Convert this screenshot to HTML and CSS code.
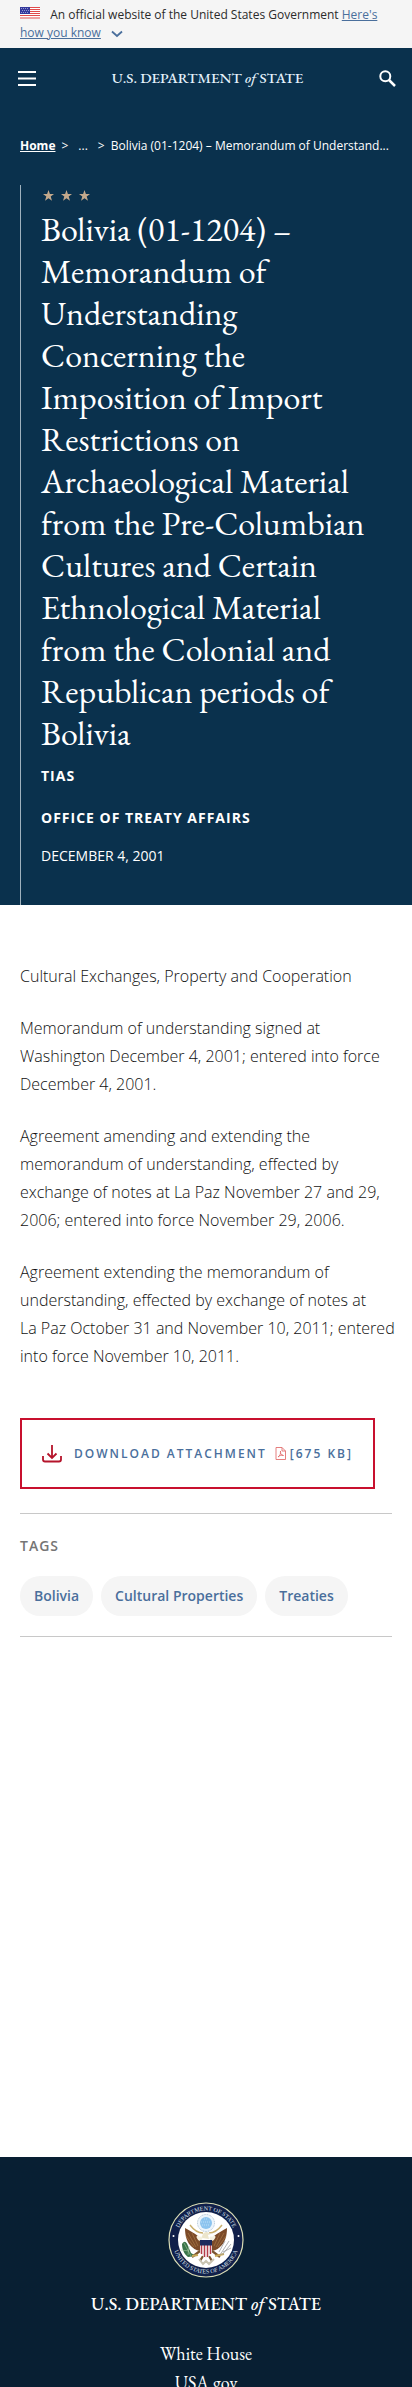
FILE: index.html
```html
<!DOCTYPE html>
<html lang="en">
<head>
<meta charset="utf-8">
<meta name="viewport" content="width=device-width, initial-scale=1">
<title>Bolivia (01-1204) - United States Department of State</title>
<link rel="stylesheet" href="styles.css">
</head>
<body>
<div class="page">
  <div class="banner">
    <svg class="banner-flag" viewBox="0 0 20 12" aria-hidden="true">
      <rect width="20" height="12" fill="#fff"/>
      <path d="M0 .5h20M0 2.5h20M0 4.5h20M0 6.5h20M0 8.5h20M0 11h20" stroke="#e04a4a" stroke-width="1.2"/>
      <rect width="10" height="7" fill="#34389b"/>
      <path d="M1 1.5h8M2 3.5h7M1 5.5h8" stroke="#aab0e0" stroke-width=".8" stroke-dasharray="1 1"/>
    </svg>
    <span>An official website of the United States Government</span>
    <a class="banner-link" href="#">Here's how you know</a>
    <svg class="banner-chevron" viewBox="0 0 12 8" aria-hidden="true"><path d="M1 1.5l5 4.500 5-4.500" fill="none" stroke="#4a6f9c" stroke-width="1.8"/></svg>
  </div>

  <header class="header">
    <button class="icon-button" type="button" aria-label="Menu">
      <svg width="18" height="15" viewBox="0 0 18 15"><path d="M0 1h18M0 7.500h18M0 14h18" stroke="#fff" stroke-width="2"/></svg>
    </button>
    <a class="wordmark" href="#">U.S. DEPARTMENT <em>of</em> STATE</a>
    <button class="icon-button" type="button" aria-label="Search">
      <svg width="17" height="17" viewBox="0 0 17 17" fill="none" stroke="#fff"><circle cx="6.300" cy="6.300" r="5" stroke-width="2"/><path d="M10 10l6 6" stroke-width="2.500"/></svg>
    </button>
  </header>

  <section class="hero">
    <nav class="crumbs" aria-label="Breadcrumb">
      <a class="crumb-home" href="#">Home</a>
      <span class="crumb-sep">&gt;</span>
      <span class="crumb-more">...</span>
      <span class="crumb-sep">&gt;</span>
      <span class="crumb-current">Bolivia (01-1204) – Memorandum of Understand...</span>
    </nav>
    <div class="hero-body">
      <svg class="stars" viewBox="0 0 48 11" aria-hidden="true">
        <defs><path id="star" d="M5.500 0l1.400 4H11L7.700 6.500 9 10.700 5.500 8.200 2 10.700l1.300-4.200L0 4h4.100z"/></defs>
        <g fill="#c4a98c"><use href="#star"/><use href="#star" x="18"/><use href="#star" x="36"/></g>
      </svg>
      <h1 class="title">Bolivia (01-1204) – Memorandum of Understanding Concerning the Imposition of Import Restrictions on Archaeological Material from the Pre-Columbian Cultures and Certain Ethnological Material from the Colonial and Republican periods of Bolivia</h1>
      <p class="meta meta-strong">TIAS</p>
      <p class="meta meta-strong">OFFICE OF TREATY AFFAIRS</p>
      <p class="meta meta-date">DECEMBER 4, 2001</p>
    </div>
  </section>

  <main class="main">
    <div class="copy">
      <p>Cultural Exchanges, Property and Cooperation</p>
      <p>Memorandum of understanding signed at Washington December 4, 2001; entered into force December 4, 2001.</p>
      <p>Agreement amending and extending the memorandum of understanding, effected by exchange of notes at La Paz November 27 and 29, 2006; entered into force November 29, 2006.</p>
      <p>Agreement extending the memorandum of understanding, effected by exchange of notes at La&nbsp;Paz October 31 and November 10, 2011; entered into force November 10, 2011.</p>
    </div>
    <a class="download" href="#">
      <svg class="download-icon" viewBox="0 0 20 18" fill="none" stroke="#b5142b" stroke-width="1.800" aria-hidden="true"><path d="M10 0v13M5.500 8.500l4.500 4.500 4.500-4.500"/><path d="M1 11v3.500a2 2 0 0 0 2 2h14a2 2 0 0 0 2-2V11"/></svg>
      <span>DOWNLOAD ATTACHMENT</span>
      <span class="download-size">
        <svg width="11" height="13" viewBox="0 0 11 13" fill="none" stroke="#e2706f" stroke-width=".9" aria-hidden="true"><path d="M1 .5h6l3.500 3.500v8.500H1zM7 .5V4h3.500"/><path d="M3 10c2-1 3-4 2.500-6C5 6 6 8 8.500 8.500 6 8 4.500 8.500 3 10z"/></svg>[675 KB]
      </span>
    </a>
    <section class="tags">
      <h2 class="tags-title">TAGS</h2>
      <div class="tags-list">
        <a class="tag" href="#">Bolivia</a>
        <a class="tag" href="#">Cultural Properties</a>
        <a class="tag" href="#">Treaties</a>
      </div>
    </section>
  </main>

  <footer class="footer">
    <svg class="seal" viewBox="0 0 76 76" role="img" aria-label="Department of State seal">
      <defs>
        <path id="arc-top" d="M8.500 38a29.500 29.500 0 0 1 59 0"/>
        <path id="arc-bottom" d="M4.500 38a33.500 33.500 0 0 0 67 0"/>
      </defs>
      <circle cx="38" cy="38" r="37" fill="#101f4a" stroke="#d9dcb4" stroke-width="1.200"/>
      <circle cx="38" cy="38" r="28" fill="#fff"/>
      <g class="seal-text" text-anchor="middle">
        <text><textPath href="#arc-top" startOffset="50%">DEPARTMENT OF STATE</textPath></text>
        <text><textPath href="#arc-bottom" startOffset="50%">UNITED STATES OF AMERICA</textPath></text>
      </g>
      <circle cx="5.500" cy="34" r="1" fill="#fff"/><circle cx="70.500" cy="34" r="1" fill="#fff"/>
      <circle cx="38" cy="21" r="8.500" fill="#edf5fc" stroke="#9fb6c9" stroke-width=".8" stroke-dasharray="1 .7"/>
      <circle cx="38" cy="21" r="6" fill="#8cc4ef"/>
      <path d="M33 20h10M34 23h8M36 17h4" stroke="#c8e4fa" stroke-width=".8" stroke-dasharray="1 1"/>
      <path d="M22 23q6 8 13 8M54 23q-6 8-13 8" fill="none" stroke="#c9ae6b" stroke-width="1.400"/>
      <path d="M17 26c4 2 9 5 13 8l3 4h10l3-4c4-3 9-6 13-8 0 8-2 15-7 19-3 3-7 4-10 4h-8c-3 0-7-1-10-4-5-4-7-11-7-19z" fill="#7b4a28"/>
      <path d="M20 31l8 14M24 31l6 13M56 31l-8 14M52 31l-6 13M18 34l8 11M58 34l-8 11" stroke="#a97946" stroke-width=".7"/>
      <path d="M34 36c0-4 2-6 5-6l4 2-3 1 1 4z" fill="#ece5cb"/>
      <path d="M30 35q2 4 3 1M46 35q-2 4-3 1" fill="none" stroke="#f5f1e0" stroke-width="3" stroke-linecap="round"/>
      <path d="M32 49l-8 6M44 49l8 6M35 54l-3 5M41 54l3 5" stroke="#7b5530" stroke-width="2.200"/>
      <path d="M32 39h12v10q-1 5-6 7-5-2-6-7z" fill="#f4efef"/>
      <path d="M33.500 43v9M36.500 43v12M39.500 43v12M42.500 43v9" stroke="#b53b48" stroke-width="1.400"/>
      <path d="M32 38h12v5.500H32z" fill="#1c2a5c"/>
      <path d="M14 42c3-5 5-1 6 2l3 7 5 3-8 1c-4-3-6-8-6-13z" fill="#397448"/>
      <path d="M16 41l7 13M13 48l8 1M21 44l-1 9" stroke="#a5c8a0" stroke-width=".6"/>
      <path d="M24 54l6-1M47 54l9-2" stroke="#c9a958" stroke-width="2"/>
      <path d="M52 53l9-14M54 53l9-11M51 50l6-11M55 50l8-4" stroke="#9b9d9e" stroke-width=".8"/>
      <path d="M31 57l4 5 3-3 3 3 5-5" fill="none" stroke="#c9c4b2" stroke-width="2"/>
    </svg>
    <a class="wordmark wordmark-large" href="#">U.S. DEPARTMENT <em>of</em> STATE</a>
    <nav class="footer-links" aria-label="Footer">
      <a href="#">White House</a>
      <a href="#">USA.gov</a>
    </nav>
  </footer>
</div>
</body>
</html>
```
FILE: styles.css
```css
* { box-sizing: border-box; }

body {
  margin: 0;
  font-family: "Open Sans", sans-serif;
  color: #323a45;
  background: #fff;
}

a { color: inherit; text-decoration: none; }
p, h1, h2 { margin: 0; }
svg { flex: none; }

.page {
  height: 100vh;
  overflow: hidden;
}

.banner {
  padding: 6px 20px;
  background: #f5f5f5;
  color: #2b2b2b;
  font-size: 12px;
  line-height: 18px;
}
.banner-flag { width: 20px; height: 12px; margin-right: 7px; }
.banner-link { color: #4a6f9c; text-decoration: underline; }
.banner-chevron { width: 12px; height: 8px; margin-left: 7px; vertical-align: middle; }

.header {
  display: flex;
  align-items: center;
  justify-content: space-between;
  height: 60px;
  padding: 0 16px 0 18px;
  background: #0a314d;
}
.icon-button {
  display: flex;
  padding: 0;
  border: 0;
  background: none;
}
.wordmark {
  font-family: "EB Garamond", "Liberation Serif", serif;
  font-size: 15px;
  font-weight: 500;
  line-height: 20px;
  color: #e4f1fc;
}
.wordmark-large { font-size: 18px; line-height: 24px; color: #fff; }

.hero {
  padding: 28px 20px 0;
  background: #0a314d;
  color: #fff;
}
.crumbs {
  display: flex;
  font-size: 12px;
  line-height: 20px;
}
.crumb-home { font-weight: 700; text-decoration: underline; }
.crumb-sep { margin: 0 6px; }
.crumb-more { margin: 0 4px; }
.crumb-current {
  flex: 1;
  min-width: 0;
  white-space: nowrap;
}
.hero-body {
  margin-top: 29px;
  padding: 5px 20px 35px;
  border-left: 1px solid #9fb1bd;
}
.stars { display: block; width: 48px; height: 11px; margin: 0 2px 7px; }
.title {
  margin-bottom: 8px;
  font-family: "EB Garamond", "Liberation Serif", serif;
  font-size: 34px;
  font-weight: 400;
  line-height: 42px;
}
.meta { font-size: 14px; line-height: 28px; }
.meta-strong { margin-bottom: 14px; font-weight: 700; letter-spacing: 1px; }
.meta-date { margin-top: -4px; }

.main { padding: 57px 20px 520px; }
.copy {
  display: grid;
  gap: 24px;
  margin-right: -4px;
  font-size: 16px;
  font-weight: 300;
  line-height: 28px;
  color: #111;
}
.download {
  display: inline-flex;
  align-items: center;
  height: 71px;
  margin-top: 48px;
  padding: 0 20px;
  border: 2px solid #c8102e;
  color: #4a6f9c;
  font-size: 12px;
  font-weight: 600;
  letter-spacing: 2px;
  white-space: nowrap;
}
.download-icon { width: 20px; height: 18px; margin-right: 12px; }
.download-size { display: flex; align-items: center; gap: 4px; margin-left: 8px; }

.tags {
  margin-top: 24px;
  padding: 20px 0;
  border-top: 1px solid #c8c8c8;
  border-bottom: 1px solid #c8c8c8;
}
.tags-title {
  margin-bottom: 18px;
  color: #757575;
  font-size: 14px;
  font-weight: 600;
  line-height: 24px;
  letter-spacing: 1px;
}
.tags-list { display: flex; flex-wrap: wrap; gap: 8px; }
.tag {
  padding: 0 14px;
  border-radius: 20px;
  background: #f5f5f5;
  color: #4a6f9c;
  font-size: 14px;
  font-weight: 600;
  line-height: 40px;
}

.footer {
  display: flex;
  flex-direction: column;
  align-items: center;
  padding: 45px 20px 40px;
  background: #081f33;
  color: #fff;
}
.seal { width: 76px; height: 76px; margin-bottom: 14px; }
.seal-text {
  fill: #dfe6ee;
  font-family: "Liberation Serif", serif;
  font-size: 6px;
}
.footer-links {
  display: flex;
  flex-direction: column;
  align-items: center;
  margin-top: 23px;
  font-family: "EB Garamond", "Liberation Serif", serif;
  font-size: 18px;
  line-height: 29px;
}
```
